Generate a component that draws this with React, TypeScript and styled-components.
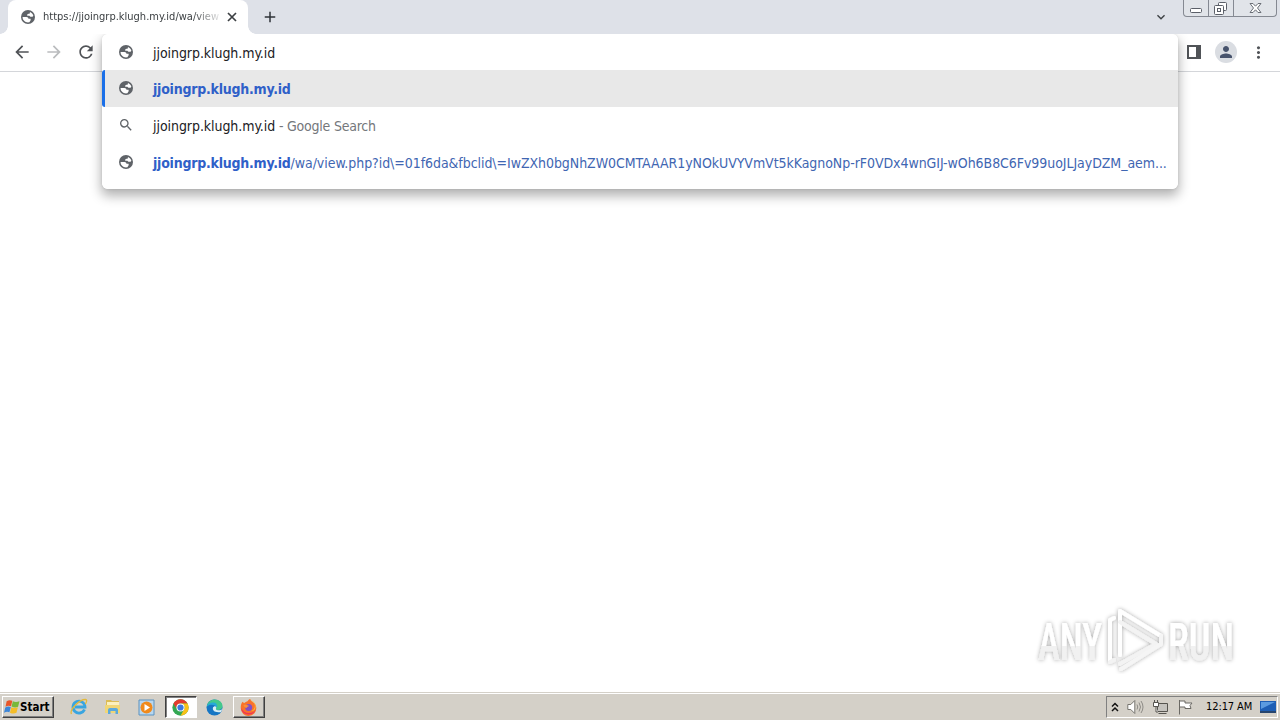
import styled, { createGlobalStyle } from "styled-components";
import {
  MdAdd,
  MdArrowBack,
  MdArrowForward,
  MdExpandMore,
  MdMoreVert,
  MdPerson,
  MdRefresh,
  MdSearch,
} from "react-icons/md";

const GlobalStyle = createGlobalStyle`
  * {
    box-sizing: border-box;
  }
  body {
    margin: 0;
    overflow: hidden;
    background-color: #fff;
    font-family: "DejaVu Sans Condensed", "DejaVu Sans", sans-serif;
    font-stretch: condensed;
  }
  svg {
    display: block;
    flex-shrink: 0;
  }
`

const Desktop = styled.div`
  width: 1280px;
  height: 720px;
  display: flex;
  flex-direction: column;
  overflow: hidden;
`

const TabStrip = styled.div`
  height: 34px;
  flex-shrink: 0;
  display: flex;
  padding-left: 8px;
  background-color: #dee1e8;
`

const Tab = styled.div`
  position: relative;
  width: 240px;
  height: 34px;
  display: flex;
  align-items: center;
  padding: 0 11px 0 13px;
  border-radius: 8px 8px 0 0;
  background-color: #fff;
  &::before,
  &::after {
    content: "";
    position: absolute;
    bottom: 0;
    width: 8px;
    height: 8px;
  }
  &::before {
    left: -8px;
    background: radial-gradient(circle at 0 0, transparent 7.5px, #fff 8px);
  }
  &::after {
    right: -8px;
    background: radial-gradient(circle at 100% 0, transparent 7.5px, #fff 8px);
  }
`

const TabTitle = styled.span`
  width: 176px;
  margin: 0 auto 0 8px;
  overflow: hidden;
  white-space: nowrap;
  font-size: 11px;
  line-height: 16px;
  color: #3c4043;
  mask-image: linear-gradient(to right, #000 150px, transparent 180px);
`

const NewTab = styled.div`
  display: flex;
  align-items: center;
  margin-left: 13px;
  color: #2f3338;
`

const TabSearch = styled.div`
  display: flex;
  align-items: center;
  margin: 0 14px 0 auto;
  color: #3c4043;
`

const WindowControls = styled.div`
  width: 94px;
  height: 17px;
  display: grid;
  grid-template-columns: 24px 25px 1fr;
  margin-right: 3px;
  border: 1px solid #858992;
  border-top: none;
  border-radius: 0 0 4px 4px;
  background: #e1e4e9;
  overflow: hidden;
`

const WindowControl = styled.div`
  display: flex;
  align-items: center;
  justify-content: center;
  & + & {
    border-left: 1px solid #858992;
  }
`

const Toolbar = styled.div`
  position: relative;
  z-index: 1;
  height: 38px;
  flex-shrink: 0;
  display: flex;
  align-items: center;
  padding: 0 12px 1px;
  gap: 12px;
  border-bottom: 1px solid #d4d6da;
  background-color: #fff;
`

const ToolButton = styled.div<{ $muted?: boolean }>`
  width: 20px;
  height: 20px;
  display: flex;
  align-items: center;
  justify-content: center;
  color: ${({ $muted }) => ($muted ? '#babcbe' : '#505357')};
`

const Actions = styled.div`
  display: flex;
  align-items: center;
  gap: 11px;
  margin-left: auto;
`

const Avatar = styled.div`
  width: 22px;
  height: 22px;
  display: flex;
  align-items: center;
  justify-content: center;
  border-radius: 50%;
  background-color: #dadde2;
  color: #47536c;
`

// the suggestion list drops over the page below the toolbar
const Omnibox = styled.div`
  position: absolute;
  top: 0;
  left: 102px;
  width: 1076px;
  height: 155px;
  overflow: hidden;
  border-radius: 6px;
  background-color: #fff;
`

const OmniboxShadow = styled.div`
  position: absolute;
  top: 0;
  left: 102px;
  width: 1076px;
  height: 155px;
  border-radius: 6px;
  box-shadow: 0 6px 12px 1px rgba(0, 0, 0, 0.3), 0 0 3px rgba(0, 0, 0, 0.1);
  clip-path: inset(0 -30px -30px -30px);
`

const Suggestion = styled.div<{ $selected?: boolean }>`
  height: 37px;
  display: flex;
  align-items: center;
  padding-left: 14px;
  border-left: 3px solid ${({ $selected }) => ($selected ? '#1a6fe8' : 'transparent')};
  border-radius: 3px 0 0 3px;
  background-color: ${({ $selected }) => ($selected ? '#e8e8e8' : 'transparent')};
  color: #606468;
`

const InputRow = styled(Suggestion)`
  height: 36px;
`

const SuggestionIcon = styled.div`
  width: 14px;
  height: 37px;
  display: flex;
  align-items: center;
  justify-content: center;
  padding-bottom: 1px;
`

const Line = styled.div`
  display: flex;
  margin-left: 20px;
  padding-top: 1px;
  white-space: pre;
  font-size: 14px;
  line-height: 20px;
  letter-spacing: -0.06px;
`

const Query = styled.span`
  color: #202124;
`

const Hint = styled.span`
  color: #74777b;
  letter-spacing: -0.22px;
`

const Match = styled.span`
  font-weight: 700;
  letter-spacing: -0.23px;
  color: #2f60c8;
`

const Url = styled.span`
  color: #3f66b2;
`

const Page = styled.div`
  flex: 1;
  display: flex;
  align-items: flex-end;
  justify-content: flex-end;
  padding: 0 0 18px 0;
`

const Taskbar = styled.div`
  height: 28px;
  flex-shrink: 0;
  display: flex;
  align-items: center;
  padding: 3px 2px 2px 2px;
  border-top: 1px solid #d4d0c8;
  box-shadow: inset 0 1px 0 #fff;
  background-color: #d4d0c8;
`

const StartButton = styled.div`
  width: 52px;
  height: 22px;
  display: flex;
  align-items: center;
  padding: 0 0 1px 1px;
  border: 1px solid;
  border-color: #fff #404040 #404040 #fff;
  box-shadow: inset -1px -1px 0 #808080;
  font-size: 11.5px;
  font-weight: 700;
  color: #000;
`

const Launchers = styled.div`
  display: flex;
  margin-left: 9px;
`

const Launcher = styled.div<{ $state?: 'active' | 'open' }>`
  width: 32px;
  height: 22px;
  display: flex;
  align-items: center;
  justify-content: center;
  margin-right: 2px;
  padding-right: 1px;
  border: 1px solid transparent;
  ${({ $state }) => $state === 'active' && `
    background-color: #fff;
    border-color: #404040 #fff #fff #404040;
    box-shadow: inset 1px 1px 0 #808080;
  `}
  ${({ $state }) => $state === 'open' && `
    border-color: #fff #404040 #404040 #fff;
    box-shadow: inset -1px -1px 0 #808080;
  `}
`

const Tray = styled.div`
  width: 172px;
  height: 22px;
  display: flex;
  align-items: center;
  margin-left: auto;
  padding: 0 0 1px 4px;
  border: 1px solid;
  border-color: #808080 #fff #fff #808080;
`

const TrayIcons = styled.div`
  display: flex;
  align-items: center;
  gap: 8px;
`

const Clock = styled.span`
  margin: 0 8px 0 12px;
  white-space: nowrap;
  font-size: 11px;
  letter-spacing: -0.1px;
  color: #000;
`

function Globe() {
  return (
    <svg width="14" height="14" viewBox="0 0 16 16">
      <circle cx="8" cy="8" r="8" fill="#5f6368" />
      <path d="M1.800 8h4.400c1.500 0 2.300.9 2.300 2.100H11v1.700L9.600 14c-4 .9-8-2-7.800-6z" fill="#fff" />
      <path d="M10.300 2.200c1.900.8 3.300 2.300 3.800 4.300l-.9 1.100h-2.500L9.600 6.500H7.200c-.5-1 .1-2.200 1.500-2.200h1.100z" fill="#fff" />
    </svg>
  )
}

function Watermark() {
  return (
    <svg width="246" height="70" viewBox="0 0 246 70">
      <defs>
        <linearGradient id="fade" x1="0" y1="0" x2="0" y2="1">
          <stop offset="0.55" stopColor="#fff" />
          <stop offset="0.56" stopColor="#f1f1f1" />
        </linearGradient>
        <filter id="soft" x="-10%" y="-10%" width="120%" height="120%">
          <feDropShadow dx="0" dy="0" stdDeviation="2" floodColor="#000" floodOpacity="0.36" />
        </filter>
      </defs>
      <g filter="url(#soft)" fill="url(#fade)" fontFamily="Roboto, sans-serif" fontSize="52" fontWeight="500">
        <text x="4" y="56" textLength="64" lengthAdjust="spacingAndGlyphs">ANY</text>
        <text x="134" y="56" textLength="66" lengthAdjust="spacingAndGlyphs">RUN</text>
      </g>
      <g filter="url(#soft)" fill="none" stroke="#fff" strokeWidth="4" strokeLinejoin="round" strokeLinecap="round">
        <path d="M86 51V7l41 25" />
        <path d="M86 18l36 22-36 20" stroke="#f3f3f3" />
        <path d="M76 57V16l4-2" />
        <path d="M76 58l4-2" stroke="#f3f3f3" />
        <path d="M87 65l40-25v-8" stroke="#f5f5f5" />
      </g>
    </svg>
  )
}

function WindowsFlag() {
  return (
    <svg width="16" height="16" viewBox="0 0 15 15">
      <path d="M2.500 2.200C4.500.8 6 .9 7.800 1.700L6.600 6.900C5 6.200 3.300 6.200 1.400 7.300z" fill="#e8562a" />
      <path d="M8.300 2c1.900 1 3.800 1 6.200 0l-1.300 5.200c-1.900 1-3.800.9-6.100-.1z" fill="#78b83a" />
      <path d="M1.200 7.900c1.900-1.200 3.500-1.200 5.200-.4l-1.300 5C3.500 11.800 2 11.800 0 12.900z" fill="#3d86d8" />
      <path d="M6.900 7.800c2 .9 3.900 1 6.100 0L11.700 13c-2 1-3.900.9-6.100-.1z" fill="#f5bd28" />
    </svg>
  )
}

function Explorer() {
  return (
    <svg width="18" height="18" viewBox="0 0 18 18">
      <path d="M14.500 11.500A6 6 0 1 1 15 9H5" fill="none" stroke="#39a5e0" strokeWidth="2.800" />
      <path d="M1.500 16C-1 12 10 1 15.500 1.500c2 .2 1 3-.2 4.500" fill="none" stroke="#e3b93a" strokeWidth="1.300" />
    </svg>
  )
}

function Folder() {
  return (
    <svg width="18" height="18" viewBox="0 0 18 18">
      <path d="M2 2h5l1 1h7v11H2z" fill="#dcbc55" />
      <path d="M3 4h12v4H3z" fill="#fbf0bd" />
      <path d="M1 7h15v8H1z" fill="#f0d676" />
      <path d="M4 16v-4c0-1.300 1-2 2-2h6c1 0 2 .7 2 2v4h-2.500v-3h-5v3z" fill="#5ba9dc" />
    </svg>
  )
}

function MediaPlayer() {
  return (
    <svg width="17" height="17" viewBox="0 0 17 17">
      <path d="M1 1h15v15H1z" fill="#b8d7ef" stroke="#5b92c0" />
      <circle cx="8.500" cy="8.500" r="6" fill="#f08a1c" />
      <path d="M6.500 5v7l5.500-3.500z" fill="#fff" />
    </svg>
  )
}

function Chrome() {
  return (
    <svg width="17" height="17" viewBox="0 0 48 48">
      <circle cx="24" cy="24" r="23" fill="#34a853" />
      <path d="M4.100 12.500A23 23 0 0 1 43.900 12.500H24A11.500 11.500 0 0 0 14 29.800z" fill="#e33b2e" />
      <path d="M43.900 12.500A23 23 0 0 1 24 47l10-17.200A11.500 11.500 0 0 0 24 12.500z" fill="#fbc116" />
      <circle cx="24" cy="24" r="11.500" fill="#fff" />
      <circle cx="24" cy="24" r="8.800" fill="#3b78e0" />
    </svg>
  )
}

function Edge() {
  return (
    <svg width="17" height="17" viewBox="0 0 17 17">
      <circle cx="8.500" cy="8.500" r="8" fill="#1676c4" />
      <path d="M.8 7.500C1.500 3 5 .5 8.800.5c4.500 0 7.700 3 7.700 6.500 0 2.600-2 4-4.200 4-2 0-3-.8-2.300-1.800C11 7 9.200 4.900 6.500 4.900 3.900 4.900 1.800 6 .8 7.500z" fill="#43c88c" />
      <path d="M.8 7.500c.8-3 4-4.500 7-4 2.500.4 4 2.500 3.200 5C9.500 5.500 4 4.500.8 7.500z" fill="#27a9d8" />
      <path d="M7 8.500c-1 3 2 5.500 8 4.500l1.500-3c-2 1.800-5.800 1.700-6.500.2-.3-.8.400-1.200.2-2.200-.6-1.500-2.600-.8-3.200.5z" fill="#d9f0f5" />
    </svg>
  )
}

function Firefox() {
  return (
    <svg width="17" height="17" viewBox="0 0 17 17">
      <path d="M1 6c.3-1.500 1-2.600 1.800-3.300L4 4.200C5 2.900 7.500 3 8.500 1c.8-.7 1.200-.8 1.800-.9.2 1.600 1.500 2 2.700 3.200 2 1 3.300 3.500 3.300 5.700a7.700 7.700 0 0 1-15.500.5C.7 8 .8 7 1 6z" fill="#f9722b" />
      <path d="M10.300.1c.2 1.900 4 2.500 4.500 5.900.5 3-1.300 5.500-3.800 6 5.300 0 5.600-6 3-8.800C12.700 2 10.900 1.700 10.300.1z" fill="#fdc332" />
      <path d="M1 9c2 3 4 5 8 5 3 0 5-1.200 6.600-3A7.700 7.700 0 0 1 1 9z" fill="#ee3556" />
      <circle cx="8.700" cy="8.500" r="3.500" fill="#8050c5" />
      <path d="M3.500 6c2-.8 3.500 0 5.500.8C8 8 7 7.700 6.500 9c-1.500-.3-2.700-1.200-3-3z" fill="#f99038" />
    </svg>
  )
}

function Speaker() {
  return (
    <svg width="17" height="16" viewBox="0 0 17 16" fill="none" stroke="#77756f">
      <path d="M.8 5.500h3l4-4v13l-4-4h-3z" fill="#fff" />
      <path d="M10 5.500q1.500 2.500 0 5M12 3.500q3 4.500 0 9M14 2q4 6 0 12" stroke="#8d8b86" />
    </svg>
  )
}

function Network() {
  return (
    <svg width="17" height="16" viewBox="0 0 17 16" fill="#fff" stroke="#56544f">
      <path d="M5.500 4.500h10v8h-10z" fill="#c5c3be" />
      <path d="M6.500 14.500h8" />
      <path d="M1.500 3.500h5v4h-5zM2.500 1v2.500M5.500 1v2.500M4 7.500v5.500h2" />
    </svg>
  )
}

function ActionFlag() {
  return (
    <svg width="17" height="16" viewBox="0 0 17 16" fill="#fff" stroke="#6b6964">
      <path d="M2.500 1v14.500" />
      <path d="M2.500 2h5.500v2h7l-2 2.500 1 3H8v-1.500H2.500z" />
    </svg>
  )
}

function App() {
  return (
    <Desktop>
      <GlobalStyle />
      <TabStrip>
        <Tab>
          <Globe />
          <TabTitle>https://jjoingrp.klugh.my.id/wa/view</TabTitle>
          <svg width="10" height="10" viewBox="0 0 10 10">
            <path d="M1 1l8 8M9 1L1 9" stroke="#3c4043" strokeWidth="1.700" />
          </svg>
        </Tab>
        <NewTab>
          <MdAdd size={18} />
        </NewTab>
        <TabSearch>
          <MdExpandMore size={16} />
        </TabSearch>
        <WindowControls>
          <WindowControl>
            <svg width="12" height="17" viewBox="0 0 12 17">
              <rect x="0.500" y="8.500" width="11" height="4" rx="1" fill="#fff" stroke="#5b5f68" />
            </svg>
          </WindowControl>
          <WindowControl>
            <svg width="14" height="17" viewBox="0 0 14 17" fill="#fff" stroke="#5b5f68">
              <rect x="4.500" y="2.500" width="8" height="8" rx="1" />
              <rect x="0.500" y="5.500" width="9" height="9" rx="1" />
              <rect x="3.500" y="8.500" width="3" height="3" />
            </svg>
          </WindowControl>
          <WindowControl>
            <svg width="13" height="17" viewBox="0 0 13 17">
              <path d="M1 3.500h3l2.500 2.700L9 3.500h3L8.500 8l3.500 4.500H9L6.500 9.800 4 12.500H1L4.500 8z" fill="#fff" stroke="#6b6f77" strokeLinejoin="round" />
            </svg>
          </WindowControl>
        </WindowControls>
      </TabStrip>

      <Toolbar>
        <ToolButton>
          <MdArrowBack size={20} />
        </ToolButton>
        <ToolButton $muted>
          <MdArrowForward size={20} />
        </ToolButton>
        <ToolButton>
          <MdRefresh size={20} />
        </ToolButton>
        <Actions>
          <ToolButton>
            <svg width="14" height="14" viewBox="0 0 14 14">
              <path d="M0 0h14v14H0zM2 2v10h7V2z" fill="#505357" fillRule="evenodd" />
            </svg>
          </ToolButton>
          <Avatar>
            <MdPerson size={18} />
          </Avatar>
          <ToolButton>
            <MdMoreVert size={19} />
          </ToolButton>
        </Actions>
        <OmniboxShadow />
        <Omnibox>
          <InputRow>
            <SuggestionIcon><Globe /></SuggestionIcon>
            <Line>
              <Query>jjoingrp.klugh.my.id</Query>
            </Line>
          </InputRow>
          <Suggestion $selected>
            <SuggestionIcon><Globe /></SuggestionIcon>
            <Line>
              <Match>jjoingrp.klugh.my.id</Match>
            </Line>
          </Suggestion>
          <Suggestion>
            <SuggestionIcon><MdSearch size={16} /></SuggestionIcon>
            <Line>
              <Query>jjoingrp.klugh.my.id</Query>
              <Hint> - Google Search</Hint>
            </Line>
          </Suggestion>
          <Suggestion>
            <SuggestionIcon><Globe /></SuggestionIcon>
            <Line>
              <Match>jjoingrp.klugh.my.id</Match>
              <Url>/wa/view.php?id\=01f6da&fbclid\=IwZXh0bgNhZW0CMTAAAR1yNOkUVYVmVt5kKagnoNp-rF0VDx4wnGIJ-wOh6B8C6Fv99uoJLJayDZM_aem...</Url>
            </Line>
          </Suggestion>
        </Omnibox>
      </Toolbar>

      <Page>
        <Watermark />
      </Page>

      <Taskbar>
        <StartButton>
          <WindowsFlag />
          Start
        </StartButton>
        <Launchers>
          <Launcher><Explorer /></Launcher>
          <Launcher><Folder /></Launcher>
          <Launcher><MediaPlayer /></Launcher>
          <Launcher $state="active"><Chrome /></Launcher>
          <Launcher><Edge /></Launcher>
          <Launcher $state="open"><Firefox /></Launcher>
        </Launchers>
        <Tray>
          <TrayIcons>
            <svg width="8" height="10" viewBox="0 0 8 10" fill="none" stroke="#111" strokeWidth="1.500">
              <path d="M1 4.500l3-3 3 3M1 9l3-3 3 3" />
            </svg>
            <Speaker />
            <Network />
            <ActionFlag />
          </TrayIcons>
          <Clock>12:17 AM</Clock>
          <svg width="16" height="14" viewBox="0 0 16 14">
            <path d="M0 1h16v10H0z" fill="#1e5fb5" />
            <path d="M1 2h14L1 9z" fill="#5b9be0" />
            <path d="M0 11h16v2H0z" fill="#26456f" />
          </svg>
        </Tray>
      </Taskbar>
    </Desktop>
  )
}

export default App
